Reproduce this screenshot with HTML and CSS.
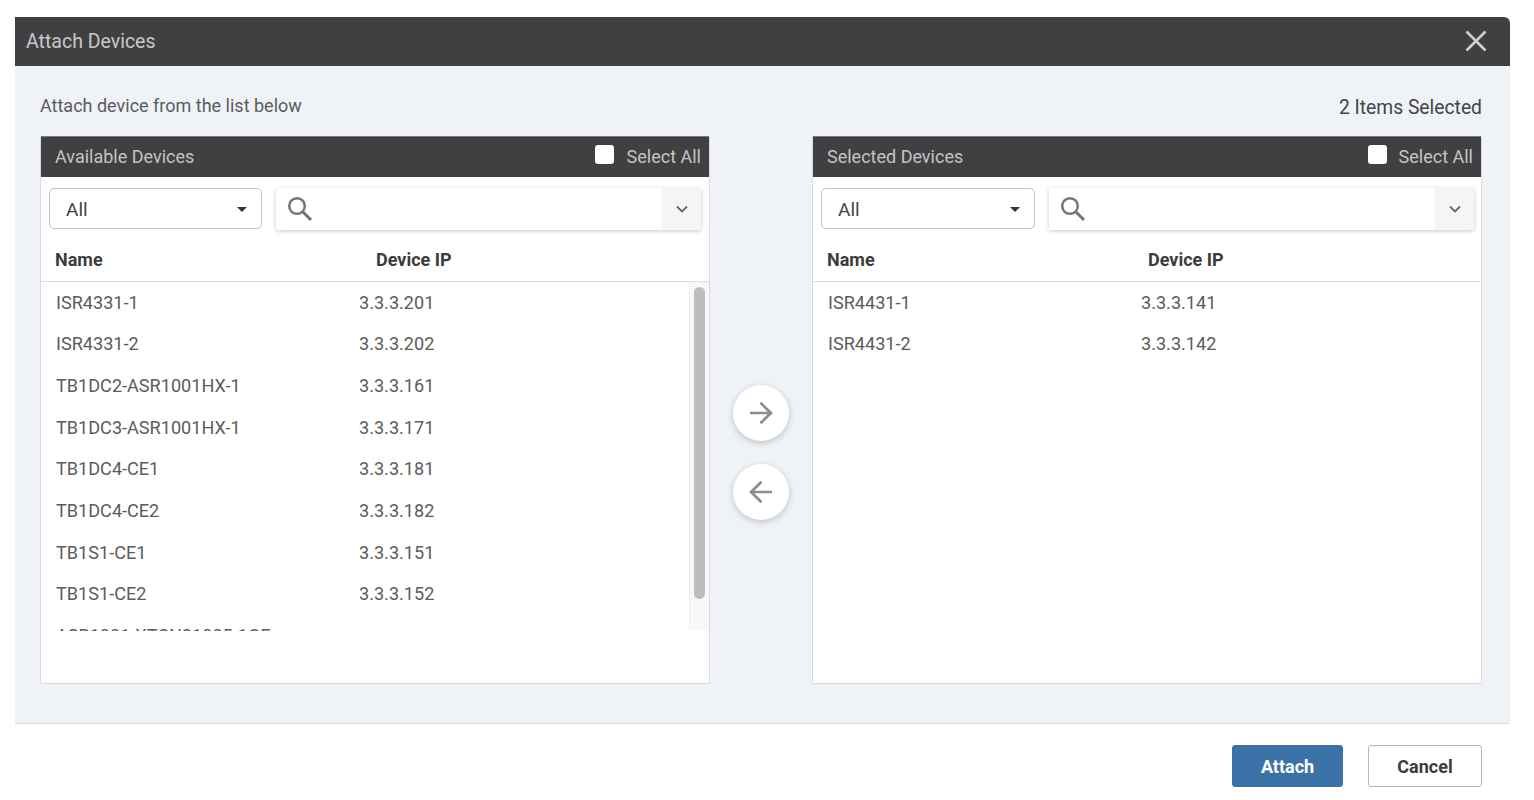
FILE: index.html
```html
<!DOCTYPE html>
<html lang="en">
<head>
<meta charset="utf-8">
<title>Attach Devices</title>
<link rel="stylesheet" href="styles.css">
</head>
<body>
<div class="modal">
  <header class="modal-head">
    <span class="modal-title">Attach Devices</span>
    <svg class="close" width="22" height="22" viewBox="0 0 22 22"><path d="M1.5 1.5l19 19M20.5 1.5l-19 19" stroke="#d0d0d0" stroke-width="2.6" fill="none"/></svg>
  </header>
  <main class="modal-body">
    <div class="intro">
      <span class="intro-text">Attach device from the list below</span>
      <span class="count">2 Items Selected</span>
    </div>
    <div class="columns">
      <section class="panel">
        <div class="panel-head">
          <span class="panel-title">Available Devices</span>
          <label class="select-all"><span class="box"></span>Select All</label>
        </div>
        <div class="tools">
          <div class="dropdown"><span>All</span><span class="caret"></span></div>
          <div class="search">
            <svg class="search-icon" width="26" height="26" viewBox="0 0 26 26"><circle cx="10" cy="10" r="7.8" fill="none" stroke="#757575" stroke-width="2.5"/><path d="M15.5 15.5l8.5 8.5" stroke="#757575" stroke-width="3" fill="none"/></svg>
            <span class="chev"><svg width="14" height="9" viewBox="0 0 14 9"><path d="M2 1.5l5 5 5-5" stroke="#666" stroke-width="1.8" fill="none"/></svg></span>
          </div>
        </div>
        <div class="thead"><span class="th-name">Name</span><span>Device IP</span></div>
        <div class="list-wrap">
          <div class="list">
            <div class="row"><span class="c-name">ISR4331-1</span><span>3.3.3.201</span></div>
            <div class="row"><span class="c-name">ISR4331-2</span><span>3.3.3.202</span></div>
            <div class="row"><span class="c-name">TB1DC2-ASR1001HX-1</span><span>3.3.3.161</span></div>
            <div class="row"><span class="c-name">TB1DC3-ASR1001HX-1</span><span>3.3.3.171</span></div>
            <div class="row"><span class="c-name">TB1DC4-CE1</span><span>3.3.3.181</span></div>
            <div class="row"><span class="c-name">TB1DC4-CE2</span><span>3.3.3.182</span></div>
            <div class="row"><span class="c-name">TB1S1-CE1</span><span>3.3.3.151</span></div>
            <div class="row"><span class="c-name">TB1S1-CE2</span><span>3.3.3.152</span></div>
            <div class="row"><span class="c-name">ASR1001-XTCN31005-1GE</span><span></span></div>
          </div>
          <div class="scrolltrack"><div class="scrollthumb"></div></div>
        </div>
      </section>
      <div class="arrows">
        <button class="round"><svg width="26" height="26" viewBox="0 0 26 26"><path d="M2 13h21M12.5 2.8L23 13 12.5 23.2" stroke="#8c8c8c" stroke-width="2.7" fill="none"/></svg></button>
        <button class="round"><svg width="26" height="26" viewBox="0 0 26 26"><path d="M24 13H3M13.5 2.8L3 13l10.5 10.2" stroke="#8c8c8c" stroke-width="2.7" fill="none"/></svg></button>
      </div>
      <section class="panel panel-right">
        <div class="panel-head">
          <span class="panel-title">Selected Devices</span>
          <label class="select-all"><span class="box"></span>Select All</label>
        </div>
        <div class="tools">
          <div class="dropdown"><span>All</span><span class="caret"></span></div>
          <div class="search">
            <svg class="search-icon" width="26" height="26" viewBox="0 0 26 26"><circle cx="10" cy="10" r="7.8" fill="none" stroke="#757575" stroke-width="2.5"/><path d="M15.5 15.5l8.5 8.5" stroke="#757575" stroke-width="3" fill="none"/></svg>
            <span class="chev"><svg width="14" height="9" viewBox="0 0 14 9"><path d="M2 1.5l5 5 5-5" stroke="#666" stroke-width="1.8" fill="none"/></svg></span>
          </div>
        </div>
        <div class="thead"><span class="th-name">Name</span><span>Device IP</span></div>
        <div class="list-wrap">
          <div class="list list-right">
            <div class="row"><span class="c-name">ISR4431-1</span><span>3.3.3.141</span></div>
            <div class="row"><span class="c-name">ISR4431-2</span><span>3.3.3.142</span></div>
          </div>
        </div>
      </section>
    </div>
  </main>
  <footer class="modal-foot">
    <button class="btn btn-primary">Attach</button>
    <button class="btn btn-plain">Cancel</button>
  </footer>
</div>
</body>
</html>
```

FILE: styles.css
```css
* { box-sizing: border-box; }
html, body { margin: 0; height: 800px; overflow: hidden; background: #fff; }
body { font-family: Roboto, "Liberation Sans", sans-serif; color: #555; }

.modal { width: 1495px; margin: 17px 0 0 15px; }

.modal-head {
  height: 49px; background: #404042; border-radius: 0 6px 0 0;
  display: flex; align-items: center; justify-content: space-between;
  padding: 0 23px 2px 11px;
}
.modal-title { font-size: 19.5px; color: #c8c8c8; margin-top: 1px; }

.modal-body {
  height: 658px; background: #eff3f7; border-bottom: 1px solid #dcdcdc;
  padding: 0 28px 0 25px;
}
.intro { height: 70px; display: flex; justify-content: space-between; padding-top: 29px; }
.intro-text { font-size: 18px; color: #5b5b5b; line-height: 22px; }
.count { font-size: 19.3px; color: #454545; line-height: 26px; }

.columns { display: flex; justify-content: space-between; height: 548px; }

.panel { width: 670px; background: #fff; border: 1px solid #dadada; border-top: 0; display: flex; flex-direction: column; }
.panel-head {
  height: 41px; background: #404042; border-top: 1px solid #7a7a7a;
  display: flex; align-items: center; justify-content: space-between;
  padding: 0 8px 2px 14px; flex: none;
}
.panel-title { font-size: 18px; color: #c4c4c4; }
.select-all { display: flex; align-items: center; font-size: 18px; color: #c4c4c4; gap: 12.5px; }
.panel-right .select-all { gap: 11.5px; }
.box { width: 19px; height: 19px; background: #fff; border-radius: 3px; margin-top: -3px; }

.tools { display: flex; height: 42px; margin-top: 11px; padding: 0 8px; gap: 14px; flex: none; }
.panel-right .tools { padding-right: 7px; }
.dropdown {
  width: 213px; height: 41px; border: 1px solid #c4c4c4; border-radius: 5px;
  display: flex; align-items: center; justify-content: space-between;
  padding: 1px 14px 0 16px; font-size: 19px; color: #444;
}
.panel-right .dropdown { width: 214px; }
.caret { width: 0; height: 0; border: 5.5px solid transparent; border-top: 5.5px solid #333; border-bottom: 0; }
.search {
  flex: 1; background: #fff; box-shadow: 0 1px 4px rgba(0,0,0,.22);
  display: flex; align-items: center; justify-content: space-between; border-radius: 2px;
}
.search-icon { margin-left: 11px; }
.chev { width: 39px; height: 100%; background: #f5f5f5; display: flex; align-items: center; justify-content: center; }

.thead {
  height: 52px; display: flex; align-items: center; flex: none;
  padding: 7px 0 0 14px; border-bottom: 1px solid #dcdcdc;
  font-size: 18px; font-weight: 700; color: #3c3c3c;
}
.th-name { width: 321px; }

.list-wrap { position: relative; height: 349px; overflow: hidden; flex: none; }
.list { padding-left: 15px; margin-top: -0.5px; }
.row { height: 41.67px; display: flex; align-items: center; font-size: 18.1px; color: #5c5c5c; }
.c-name { width: 303px; }
.list-right .c-name { width: 313px; }
.scrolltrack {
  position: absolute; top: 0; right: 0; width: 20px; height: 348px;
  background: #f8f8f8; border-left: 1px solid #ececec; padding: 5px 4px 0 4px;
}
.scrollthumb { height: 312px; background: #bdbdbd; border-radius: 6px; }

.arrows { display: flex; flex-direction: column; align-items: center; gap: 23px; padding-top: 249px; margin-left: -1px; }
.round {
  width: 56px; height: 56px; border: 0; border-radius: 50%; background: #fff; padding: 0;
  box-shadow: 0 2px 7px rgba(0,0,0,.2);
  display: flex; align-items: center; justify-content: center;
}

.modal-foot { display: flex; justify-content: flex-end; gap: 25px; padding: 21px 28px 0 0; }
.btn { height: 42px; font-family: inherit; font-size: 18px; font-weight: 700; border-radius: 3px; padding: 0; }
.btn-primary { width: 111px; background: #3a72a8; color: #fff; border: 1px solid #3a72a8; }
.btn-plain { width: 114px; background: #fff; color: #3c3c3c; border: 1px solid #b5b5b5; }
```
